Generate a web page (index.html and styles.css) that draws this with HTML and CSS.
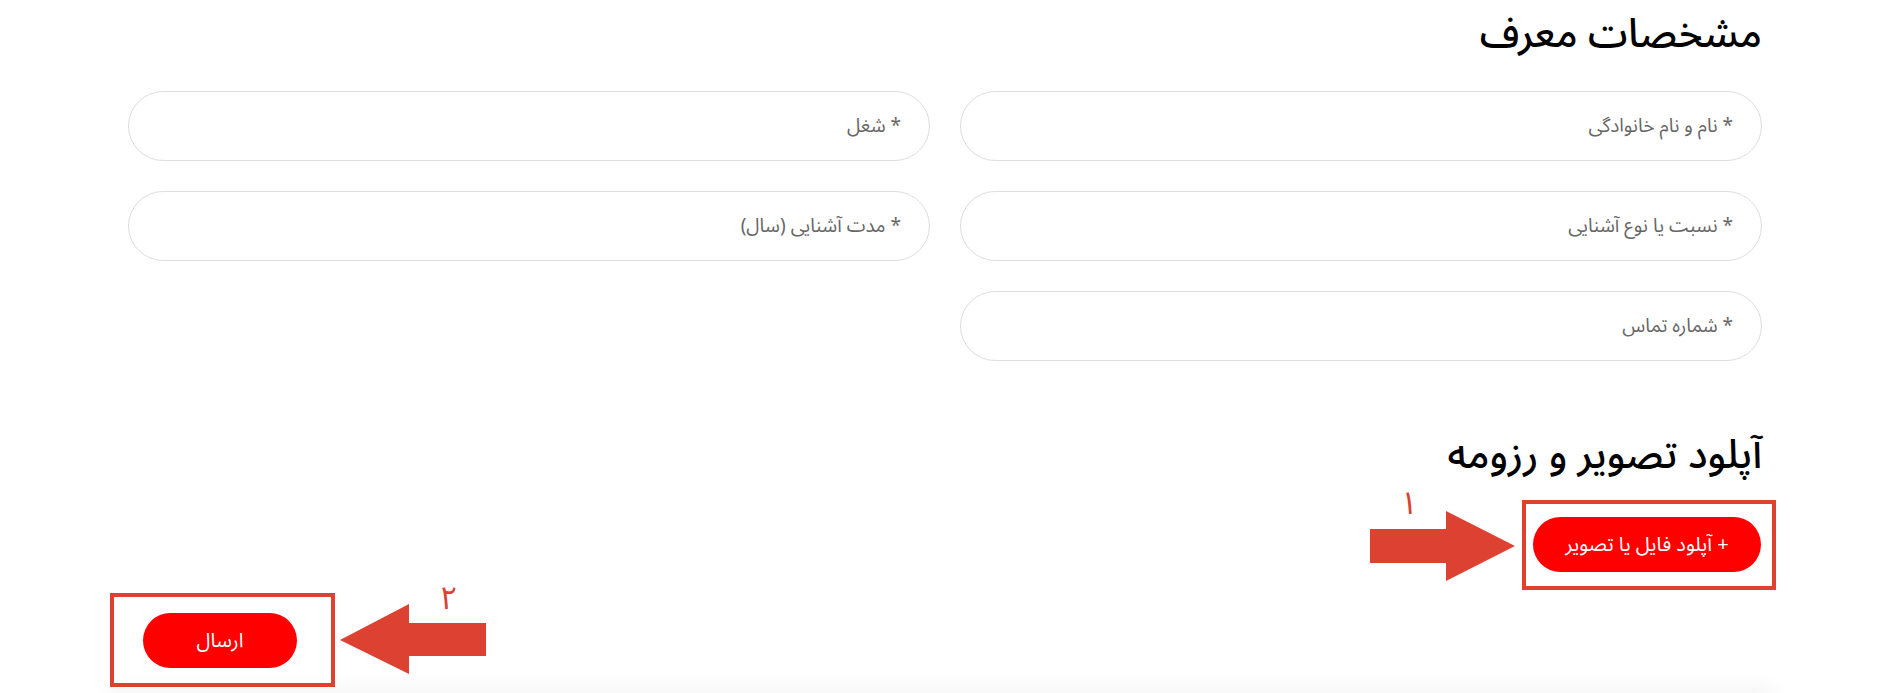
FILE: index.html
```html
<!DOCTYPE html>
<html lang="fa" dir="rtl">
<head>
    <meta charset="UTF-8">
    <meta name="viewport" content="width=device-width, initial-scale=1.0">
    <title>فرم معرف</title>
    <link rel="stylesheet" href="styles.css">
</head>
<body>
    <main class="page">
        <section class="referrer">
            <h2 class="section-title">مشخصات معرف</h2>
            <div class="field-grid">
                <input class="field" type="text" placeholder="* نام و نام خانوادگی">
                <input class="field" type="text" placeholder="* شغل">
                <input class="field" type="text" placeholder="* نسبت یا نوع آشنایی">
                <input class="field" type="text" placeholder="* مدت آشنایی (سال)">
                <input class="field" type="text" placeholder="* شماره تماس">
            </div>
        </section>

        <section class="upload">
            <h2 class="section-title">آپلود تصویر و رزومه</h2>
            <div class="step-row upload-row">
                <div class="step-box box-upload">
                    <button class="btn" type="button">+ آپلود فایل یا تصویر</button>
                </div>
                <svg class="step-arrow" width="145" height="104" viewBox="0 0 145 104">
                    <rect x="0" y="43" width="77" height="34" fill="#dc4131"/>
                    <polygon points="76,25 145,60 76,95" fill="#dc4131"/>
                    <text x="39" y="28" class="step-num" text-anchor="middle">۱</text>
                </svg>
            </div>
        </section>

        <div class="step-row submit-row">
            <svg class="step-arrow" width="146" height="103" viewBox="0 0 146 103">
                <polygon points="0,56 69,20 69,90" fill="#dc4131"/>
                <rect x="68" y="39" width="78" height="33" fill="#dc4131"/>
                <text x="109" y="25" class="step-num" text-anchor="middle">۲</text>
            </svg>
            <div class="step-box box-submit">
                <button class="btn btn-submit" type="submit">ارسال</button>
            </div>
        </div>
    </main>
    <div class="next-section"></div>
</body>
</html>
```

FILE: styles.css
```css
body {
    margin: 0;
    background-color: #fff;
    color: #000;
    font-family: "Noto Sans Arabic", "DejaVu Sans", sans-serif;
    overflow: hidden;
}

.page {
    direction: rtl;
    padding: 0 132px 0 128px;
}

.section-title {
    margin: 0;
    padding: 5px 0;
    font-size: 40px;
    font-weight: 500;
    line-height: 60px;
}

.field-grid {
    display: grid;
    grid-template-columns: 1fr 1fr;
    gap: 30px;
    margin-top: 21px;
}

.field {
    height: 70px;
    box-sizing: border-box;
    border: 1px solid #ddd;
    border-radius: 35px;
    padding: 0 28px;
    font-family: inherit;
    font-size: 19px;
    background: #fff;
    outline: none;
}

.field::placeholder {
    color: #666;
}

.upload {
    margin-top: 60px;
}

.step-row {
    display: flex;
    align-items: flex-end;
}

.upload-row {
    margin-top: -5px;
}

.step-arrow {
    display: block;
    overflow: visible;
}

.step-num {
    fill: #dc4131;
    font-size: 32px;
    font-family: "Noto Sans Arabic", "DejaVu Sans", sans-serif;
}

.step-box {
    border: 4px solid #dc4131;
    box-sizing: border-box;
}

.box-upload {
    width: 254px;
    height: 90px;
    padding: 13px 11px 0 7px;
    margin-left: 7px;
    margin-right: -14px;
}

.btn {
    background-color: #fe0000;
    color: #fff;
    border: none;
    border-radius: 28px;
    height: 55px;
    width: 228px;
    font-family: inherit;
    font-size: 20px;
    cursor: pointer;
}

.submit-row {
    justify-content: flex-end;
    margin-top: -6px;
    margin-left: -18px;
}

.box-submit {
    width: 225px;
    height: 94px;
    padding: 16px 34px 0 29px;
    margin-right: 5px;
}

.btn-submit {
    width: 154px;
}

.next-section {
    margin: 8px 120px 0 110px;
    height: 40px;
    box-shadow: 0 -6px 20px rgba(0, 0, 0, 0.05);
}
```
